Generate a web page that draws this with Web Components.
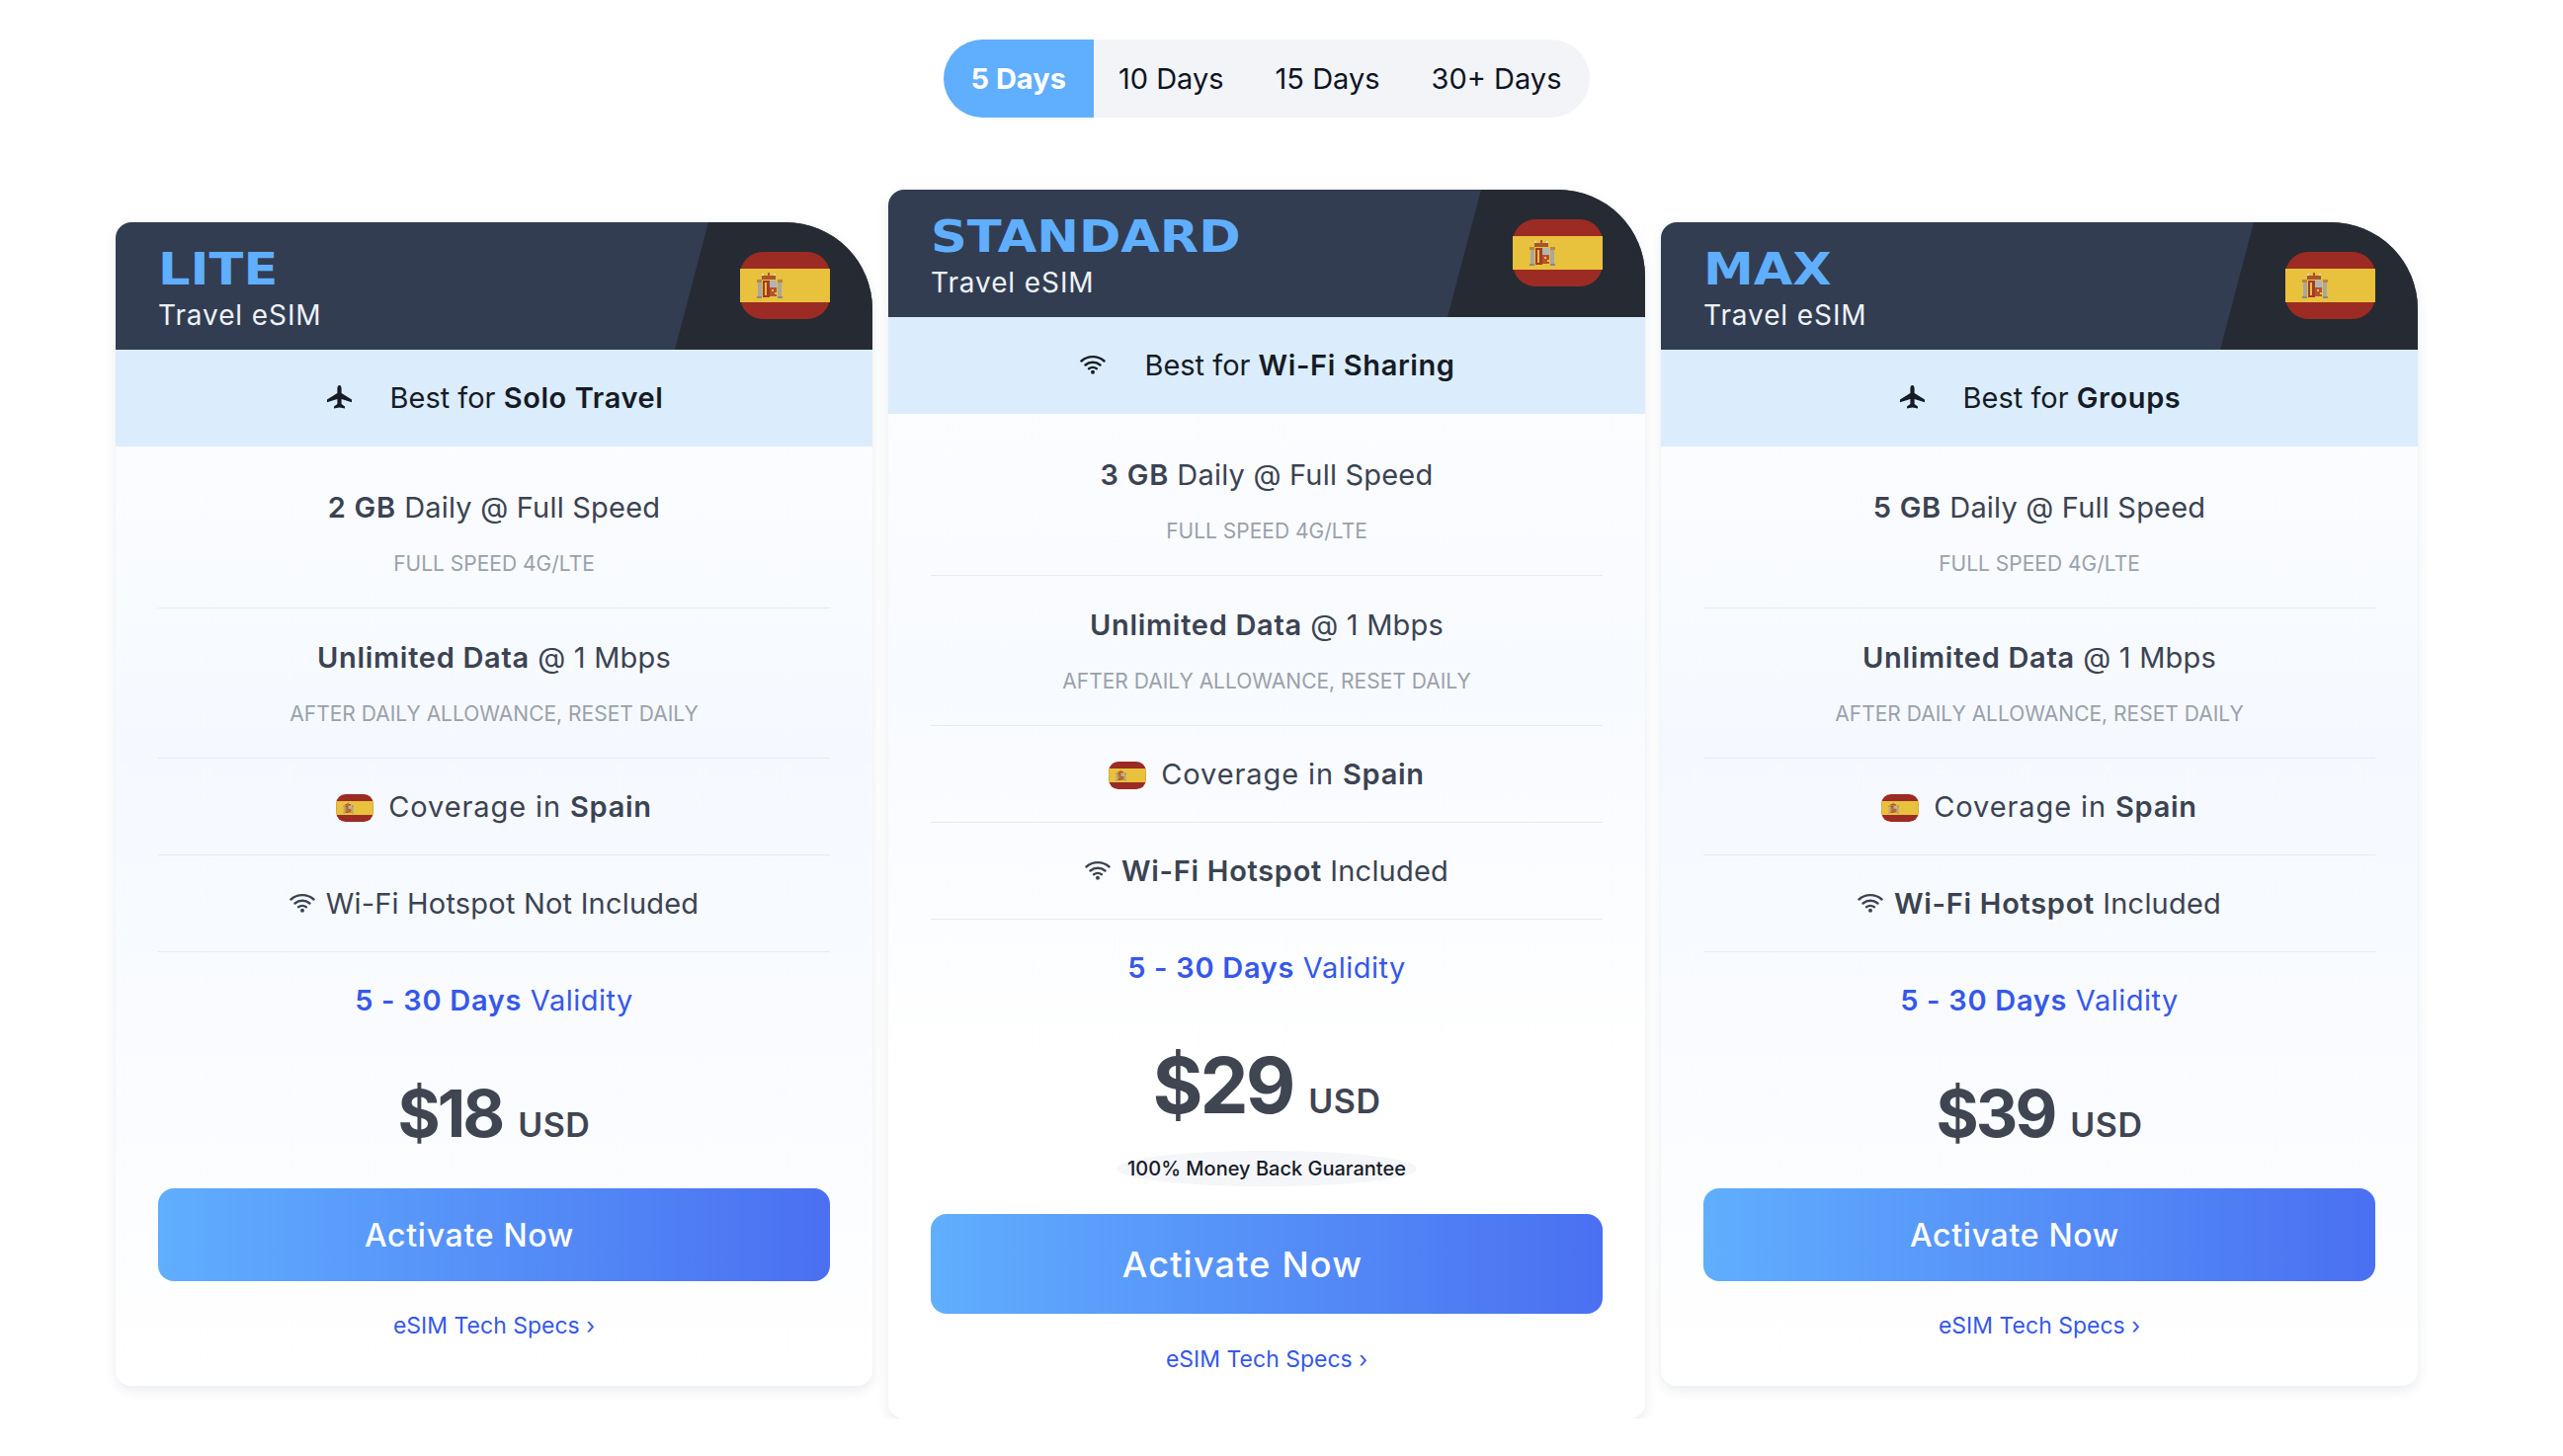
<!DOCTYPE html>
<html lang="en">
<head>
<meta charset="utf-8">
<title>eSIM plans</title>
<style>
  html,body{margin:0;background:#fff;}
  body{font-family:Inter,"Liberation Sans",sans-serif;width:2564px;padding-right:30px;}
</style>
</head>
<body>
<plans-page>
  <day-tabs slot="tabs">
    <day-tab active>5 Days</day-tab>
    <day-tab>10 Days</day-tab>
    <day-tab>15 Days</day-tab>
    <day-tab>30+ Days</day-tab>
  </day-tabs>

  <plan-card name="LITE" price="$18">
    <best-for slot="band"><plane-icon slot="icon"></plane-icon>Best for <b>Solo Travel</b></best-for>
    <feature-row first note="FULL SPEED 4G/LTE"><b>2 GB</b> Daily @ Full Speed</feature-row>
    <feature-row note="AFTER DAILY ALLOWANCE, RESET DAILY"><b>Unlimited Data</b> @ 1 Mbps</feature-row>
    <feature-row wide><flag-es small></flag-es>Coverage in <b>Spain</b></feature-row>
    <feature-row><wifi-icon></wifi-icon>Wi-Fi Hotspot Not Included</feature-row>
    <feature-row blue><b>5 - 30 Days</b> Validity</feature-row>
  </plan-card>

  <plan-card name="STANDARD" price="$29" featured>
    <best-for slot="band"><wifi-icon slot="icon"></wifi-icon>Best for <b>Wi-Fi Sharing</b></best-for>
    <feature-row first note="FULL SPEED 4G/LTE"><b>3 GB</b> Daily @ Full Speed</feature-row>
    <feature-row note="AFTER DAILY ALLOWANCE, RESET DAILY"><b>Unlimited Data</b> @ 1 Mbps</feature-row>
    <feature-row wide><flag-es small></flag-es>Coverage in <b>Spain</b></feature-row>
    <feature-row><wifi-icon></wifi-icon><b>Wi-Fi Hotspot</b> Included</feature-row>
    <feature-row blue><b>5 - 30 Days</b> Validity</feature-row>
  </plan-card>

  <plan-card name="MAX" price="$39">
    <best-for slot="band"><plane-icon slot="icon"></plane-icon>Best for <b>Groups</b></best-for>
    <feature-row first note="FULL SPEED 4G/LTE"><b>5 GB</b> Daily @ Full Speed</feature-row>
    <feature-row note="AFTER DAILY ALLOWANCE, RESET DAILY"><b>Unlimited Data</b> @ 1 Mbps</feature-row>
    <feature-row wide><flag-es small></flag-es>Coverage in <b>Spain</b></feature-row>
    <feature-row><wifi-icon></wifi-icon><b>Wi-Fi Hotspot</b> Included</feature-row>
    <feature-row blue><b>5 - 30 Days</b> Validity</feature-row>
  </plan-card>
</plans-page>

<script>
class PlansPage extends HTMLElement
{
    constructor(){
        super();
        this.attachShadow({mode: 'open'});
        this.shadowRoot.innerHTML = `
            <style>
                :host{display:flex;flex-direction:column;align-items:center;padding-top:40px;}
                .cards{display:flex;align-items:center;gap:16px;margin-top:73px;}
            </style>
            <slot name="tabs"></slot>
            <div class="cards"><slot></slot></div>
        `;
    }
}

class DayTabs extends HTMLElement
{
    constructor(){
        super();
        this.attachShadow({mode: 'open'});
        this.shadowRoot.innerHTML = `
            <style>
                :host{display:flex;height:79px;background:#f2f4f7;border-radius:40px;overflow:hidden;}
            </style>
            <slot></slot>
        `;
    }
}

class DayTab extends HTMLElement
{
    constructor(){
        super();
        this.attachShadow({mode: 'open'});
        this.shadowRoot.innerHTML = `
            <style>
                :host{display:flex;align-items:center;padding:0 26px;font-size:29px;color:#0f1422;}
                :host(:nth-child(2)){padding-left:25px;}
                :host(:last-child){padding-right:29px;}
                :host([active]){background:#60aefe;color:#fff;font-weight:700;padding:0 28px;}
            </style>
            <slot></slot>
        `;
    }
}

class PlanCard extends HTMLElement
{
    constructor(){
        super();
        this.attachShadow({mode: 'open'});
        const featured = this.hasAttribute('featured');
        this.shadowRoot.innerHTML = `
            <style>
                :host{display:flex;flex-direction:column;width:766px;border-radius:16px 88px 16px 16px;background:linear-gradient(180deg,#fff 0,#f5f9ff 45%,#f7faff 60%,#fff 100%);box-shadow:0 4px 12px rgba(40,60,100,.1);}
                :host([featured]){background:linear-gradient(180deg,#fff 0,#f7faff 40%,#fff 72%);}
                header{position:relative;height:129px;box-sizing:border-box;padding:0 43px;display:flex;align-items:center;justify-content:space-between;background:#323d52;border-radius:16px 88px 0 0;overflow:hidden;}
                .notch{position:absolute;top:0;bottom:0;right:0;width:200px;background:#262b33;clip-path:polygon(34px 0,100% 0,100% 100%,0 100%);}
                .titles{position:relative;padding-top:7px;}
                h2{margin:0;font-family:"DejaVu Sans",Inter,sans-serif;font-size:45px;line-height:46px;font-weight:700;color:#60aefe;transform:scaleX(1.135);transform-origin:left center;}
                p{margin:5px 0 0;font-size:28px;line-height:36px;color:#eef2f7;letter-spacing:.9px;}
                flag-es{position:relative;margin-top:-1px;}
                .body{display:flex;flex-direction:column;padding:0 43px;}
                .price{display:flex;justify-content:center;align-items:baseline;gap:16px;margin-top:21px;height:${featured ? 100 : 90}px;line-height:${featured ? 100 : 90}px;color:#404552;}
                .amount{font-size:${featured ? 78 : 66}px;font-weight:700;letter-spacing:-3px;}
                .cur{font-size:34px;font-weight:600;letter-spacing:.5px;}
                .pill{align-self:center;margin-top:16px;padding:0 11px;height:36px;line-height:36px;border-radius:50%;background:#f4f6f9;font-size:20px;font-weight:500;color:#161b26;white-space:nowrap;}
                .cta{display:flex;align-items:center;justify-content:center;box-sizing:border-box;padding-right:${featured ? 49 : 50}px;height:${featured ? 101 : 94}px;margin-top:${featured ? 28 : 31}px;border-radius:16px;background:linear-gradient(90deg,#60aefe,#4a70f1);color:#fff;font-size:${featured ? 36 : 32}px;font-weight:500;letter-spacing:${featured ? 1.2 : 0.7}px;}
                .specs{text-align:center;margin:${featured ? 31 : 30}px 0 ${featured ? 45 : 46}px;line-height:30px;font-size:23px;color:#3658ea;}
            </style>
            <header>
                <div class="notch"></div>
                <div class="titles"><h2></h2><p>Travel eSIM</p></div>
                <flag-es></flag-es>
            </header>
            <slot name="band"></slot>
            <div class="body">
                <slot></slot>
                <div class="price"><span class="amount"></span><span class="cur">USD</span></div>
                ${featured ? '<div class="pill">100% Money Back Guarantee</div>' : ''}
                <div class="cta">Activate Now</div>
                <div class="specs">eSIM Tech Specs ›</div>
            </div>
        `;
        this.shadowRoot.querySelector('h2').textContent = this.getAttribute('name');
        this.shadowRoot.querySelector('.amount').textContent = this.getAttribute('price');
    }
}

class BestFor extends HTMLElement
{
    constructor(){
        super();
        this.attachShadow({mode: 'open'});
        this.shadowRoot.innerHTML = `
            <style>
                :host{display:flex;align-items:center;justify-content:center;gap:39px;box-sizing:border-box;height:98px;padding-bottom:2px;background:#dbedfc;font-size:29px;color:#161b26;}
                ::slotted(b){font-weight:600;letter-spacing:.6px;}
            </style>
            <slot name="icon"></slot>
            <span><slot></slot></span>
        `;
    }
}

class FeatureRow extends HTMLElement
{
    constructor(){
        super();
        this.attachShadow({mode: 'open'});
        this.shadowRoot.innerHTML = `
            <style>
                :host{display:block;padding:28px 0 27px;border-bottom:1px solid #e6eaf0;text-align:center;color:#3b4352;font-size:29px;letter-spacing:.2px;}
                :host([first]){padding-top:41px;}
                :host([note]){padding-bottom:29px;}
                :host(:not([first])[note]){padding-top:29px;}
                :host([wide]){letter-spacing:.9px;}
                :host([blue]){border-bottom:0;color:#3658ea;letter-spacing:.5px;}
                ::slotted(b){font-weight:600;letter-spacing:.7px;}
                .line{line-height:42px;display:flex;align-items:center;justify-content:center;}
                .note{margin-top:21px;line-height:30px;font-size:21px;color:#9aa1ab;letter-spacing:0;}
                .note:empty{display:none;}
            </style>
            <div class="line"><span><slot></slot></span></div>
            <div class="note"></div>
        `;
        this.shadowRoot.querySelector('.note').textContent = this.getAttribute('note') || '';
    }
}

class FlagEs extends HTMLElement
{
    constructor(){
        super();
        this.attachShadow({mode: 'open'});
        // crest is just a handful of small blocks, it is tiny on screen
        this.shadowRoot.innerHTML = `
            <style>
                :host{display:inline-block;width:91px;height:68px;vertical-align:middle;}
                :host([small]){width:38px;height:28px;margin-right:15px;vertical-align:-5px;}
                svg{display:block;width:100%;height:100%;}
            </style>
            <svg viewBox="0 0 91 68">
                <rect width="91" height="68" rx="23" fill="#9c2b23"/>
                <rect y="17" width="91" height="34" fill="#e8c13d"/>
                <g>
                    <rect x="18" y="30" width="4" height="15" fill="#a8a8a0"/>
                    <rect x="38" y="30" width="4" height="15" fill="#a8a8a0"/>
                    <rect x="17" y="28" width="5" height="3" fill="#b9853f"/>
                    <rect x="38" y="28" width="5" height="3" fill="#b9853f"/>
                    <rect x="17" y="45" width="5" height="2" fill="#8e8a80"/>
                    <rect x="38" y="45" width="5" height="2" fill="#8e8a80"/>
                    <rect x="22" y="24" width="14" height="4" fill="#a9552c"/>
                    <rect x="28" y="21" width="2" height="3" fill="#a9552c"/>
                    <rect x="22" y="22" width="2" height="2" fill="#d8d8d0"/>
                    <rect x="34" y="22" width="2" height="2" fill="#d8d8d0"/>
                    <rect x="23" y="29" width="7" height="17" fill="#a53a26"/>
                    <rect x="30" y="29" width="7" height="7" fill="#aeb4b8"/>
                    <rect x="30" y="36" width="7" height="9" fill="#b3532f"/>
                    <rect x="32" y="38" width="2" height="2" fill="#e8c13d"/>
                    <rect x="35" y="41" width="2" height="2" fill="#e8c13d"/>
                    <rect x="25" y="31" width="2" height="13" fill="#e8c13d"/>
                </g>
            </svg>
        `;
    }
}

class WifiIcon extends HTMLElement
{
    constructor(){
        super();
        this.attachShadow({mode: 'open'});
        this.shadowRoot.innerHTML = `
            <style>
                :host{display:inline-block;width:26px;height:20px;margin-right:11px;vertical-align:1px;}
                :host([slot]){margin-right:0;margin-left:2px;}
                svg{display:block;width:100%;height:100%;}
            </style>
            <svg viewBox="0 0 26 20" fill="none" stroke="currentColor" stroke-width="2.4" stroke-linecap="round">
                <path d="M1.5 6.5C8 .7 18 .7 24.5 6.5"/>
                <path d="M5.5 10.5C9.9 6.9 16.1 6.9 20.5 10.5"/>
                <path d="M9 14.2C11.4 12.6 14.6 12.6 17 14.2"/>
                <circle cx="13" cy="17.8" r="2" fill="currentColor" stroke="none"/>
            </svg>
        `;
    }
}

class PlaneIcon extends HTMLElement
{
    constructor(){
        super();
        this.attachShadow({mode: 'open'});
        this.shadowRoot.innerHTML = `
            <style>
                :host{display:block;width:25px;height:24px;margin-left:2px;}
                svg{display:block;width:100%;height:100%;}
            </style>
            <svg viewBox="0 0 25 24" fill="currentColor">
                <path d="M12.5 0C13.8 0 14.6 1.5 14.6 3.5V8L25 14.6V17.2L14.6 14V19L18 21.4V23.6L12.5 22.4 7 23.6V21.4L10.4 19V14L0 17.2V14.6L10.4 8V3.5C10.4 1.5 11.2 0 12.5 0Z"/>
            </svg>
        `;
    }
}

customElements.define('plans-page',PlansPage);
customElements.define('day-tabs',DayTabs);
customElements.define('day-tab',DayTab);
customElements.define('plan-card',PlanCard);
customElements.define('best-for',BestFor);
customElements.define('feature-row',FeatureRow);
customElements.define('flag-es',FlagEs);
customElements.define('wifi-icon',WifiIcon);
customElements.define('plane-icon',PlaneIcon);
</script>
</body>
</html>
